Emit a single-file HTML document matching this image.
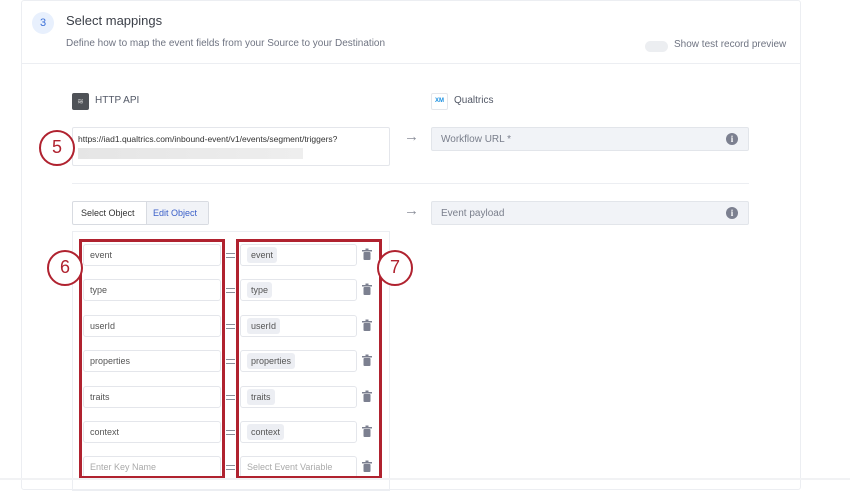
<!DOCTYPE html>
<html><head><style>
*{box-sizing:border-box;margin:0;padding:0}
body{width:850px;height:480px;background:#fff;font-family:"Liberation Sans",sans-serif;position:relative;overflow:hidden;color:#525866}
.a{position:absolute}
.card{left:21px;top:0;width:780px;height:490px;border:1px solid #eceef2;border-radius:3px}
.inp{position:absolute;height:22px;border:1px solid #e4e6eb;border-radius:3px;background:#fff;font-size:9px;padding:0 6px;color:#555;display:flex;align-items:center}
.tag{background:#eceef3;border-radius:3px;padding:3px 4px;font-size:9px;color:#555;line-height:10px}
.gray{position:absolute;height:24px;background:#f1f3f7;border:1px solid #e2e5ea;border-radius:2px;font-size:10px;color:#7a7f8c;padding:6px 9px}
.info{position:absolute;right:10px;top:5px;width:12px;height:12px;border-radius:50%;background:#7c8090;color:#fff;font-size:9px;font-weight:bold;text-align:center;line-height:12px;font-family:"Liberation Serif",serif}
.eq{position:absolute;left:226px;width:9px;height:5px;border-top:1.5px solid #8a8e99;border-bottom:1.5px solid #8a8e99}
.circ{position:absolute;width:36px;height:36px;border:2.5px solid #b0222f;border-radius:50%;background:#fff;color:#b0222f;font-size:18px;text-align:center;line-height:31px}
.red{position:absolute;border:3px solid #b0222f}
.arr{position:absolute;color:#8a8e99;font-size:15px}
</style></head><body>
<div class="a card"></div>
<div class="a" style="left:21px;top:63px;width:780px;border-top:1px solid #eceef2"></div>
<div class="a" style="left:32px;top:12px;width:22px;height:22px;border-radius:50%;background:#e8f0fd;color:#3a6fd8;font-size:11px;text-align:center;line-height:22px">3</div>
<div class="a" style="left:66px;top:13px;font-size:13px;color:#3c4049">Select mappings</div>
<div class="a" style="left:66px;top:38px;font-size:10px;color:#6f7482">Define how to map the event fields from your Source to your Destination</div>
<div class="a" style="left:645px;top:41px;width:23px;height:11px;border-radius:6px;background:#eceef1"></div>
<div class="a" style="left:674px;top:39px;font-size:10px;color:#6f7482">Show test record preview</div>

<div class="a" style="left:72px;top:93px;width:17px;height:17px;background:#4f5257;border-radius:2px;color:#ccc;font-size:8px;text-align:center;line-height:17px">≋</div>
<div class="a" style="left:95px;top:95px;font-size:10px;color:#525866">HTTP API</div>
<div class="a" style="left:431px;top:93px;width:17px;height:17px;border:1px solid #e4e6eb;border-radius:2px;color:#1a8fe0;font-size:6px;font-weight:bold;text-align:center;line-height:15px">XM</div>
<div class="a" style="left:454px;top:95px;font-size:10px;color:#525866">Qualtrics</div>

<div class="a" style="left:72px;top:127px;width:318px;height:39px;border:1px solid #e4e6eb;border-radius:2px;font-size:8.5px;color:#333;padding:6px 5px">https://iad1.qualtrics.com/inbound-event/v1/events/segment/triggers?</div>
<div class="a" style="left:78px;top:148px;width:225px;height:11px;background:linear-gradient(90deg,#e5e5e5,#eee)"></div>
<div class="arr" style="left:404px;top:128px">→</div>
<div class="gray" style="left:431px;top:127px;width:318px">Workflow URL *<span class="info">i</span></div>
<div class="a" style="left:72px;top:183px;width:677px;border-top:1px solid #eceef2"></div>

<div class="a" style="left:72px;top:201px;width:137px;height:24px;border:1px solid #d8dbe1;border-radius:2px;font-size:9px;display:flex">
<div style="width:73px;padding:6px 8px;color:#333">Select Object</div>
<div style="flex:1;padding:6px 6px;background:#f1f3f7;border-left:1px solid #d8dbe1;color:#3a5fc8">Edit Object</div></div>
<div class="arr" style="left:404px;top:202px">→</div>
<div class="gray" style="left:431px;top:201px;width:318px">Event payload<span class="info">i</span></div>
<div class="a" style="left:72px;top:231px;width:318px;height:260px;border:1px solid #eceef2"></div>

<div class="inp" style="left:83px;top:244px;width:138px">event</div><div class="eq" style="top:253px"></div><div class="inp" style="left:240px;top:244px;width:117px"><span class="tag">event</span></div>
<div class="inp" style="left:83px;top:279px;width:138px">type</div><div class="eq" style="top:288px"></div><div class="inp" style="left:240px;top:279px;width:117px"><span class="tag">type</span></div>
<div class="inp" style="left:83px;top:315px;width:138px">userId</div><div class="eq" style="top:324px"></div><div class="inp" style="left:240px;top:315px;width:117px"><span class="tag">userId</span></div>
<div class="inp" style="left:83px;top:350px;width:138px">properties</div><div class="eq" style="top:359px"></div><div class="inp" style="left:240px;top:350px;width:117px"><span class="tag">properties</span></div>
<div class="inp" style="left:83px;top:386px;width:138px">traits</div><div class="eq" style="top:395px"></div><div class="inp" style="left:240px;top:386px;width:117px"><span class="tag">traits</span></div>
<div class="inp" style="left:83px;top:421px;width:138px">context</div><div class="eq" style="top:430px"></div><div class="inp" style="left:240px;top:421px;width:117px"><span class="tag">context</span></div>
<div class="inp" style="left:83px;top:456px;width:138px;color:#aaa">Enter Key Name</div><div class="eq" style="top:465px"></div><div class="inp" style="left:240px;top:456px;width:117px;color:#aaa">Select Event Variable</div>

<svg class="a" style="left:362px;top:0" width="12" height="480">
<g fill="#7c8090">
<g id="t"><rect x="0" y="250" width="10" height="1.5"/><rect x="3.5" y="248.5" width="3" height="1.5"/><rect x="1.5" y="252" width="7" height="8" rx="1"/></g>
<use href="#t" y="35"/><use href="#t" y="71"/><use href="#t" y="106"/><use href="#t" y="142"/><use href="#t" y="177"/><use href="#t" y="212"/>
</g></svg>

<div class="red" style="left:79px;top:239px;width:146px;height:240px"></div>
<div class="red" style="left:236px;top:239px;width:146px;height:240px"></div>
<div class="circ" style="left:39px;top:130px">5</div>
<div class="circ" style="left:47px;top:250px">6</div>
<div class="circ" style="left:377px;top:250px">7</div>
<div class="a" style="left:0;top:478px;width:850px;height:2px;background:#f1f2f4"></div>
</body></html>
